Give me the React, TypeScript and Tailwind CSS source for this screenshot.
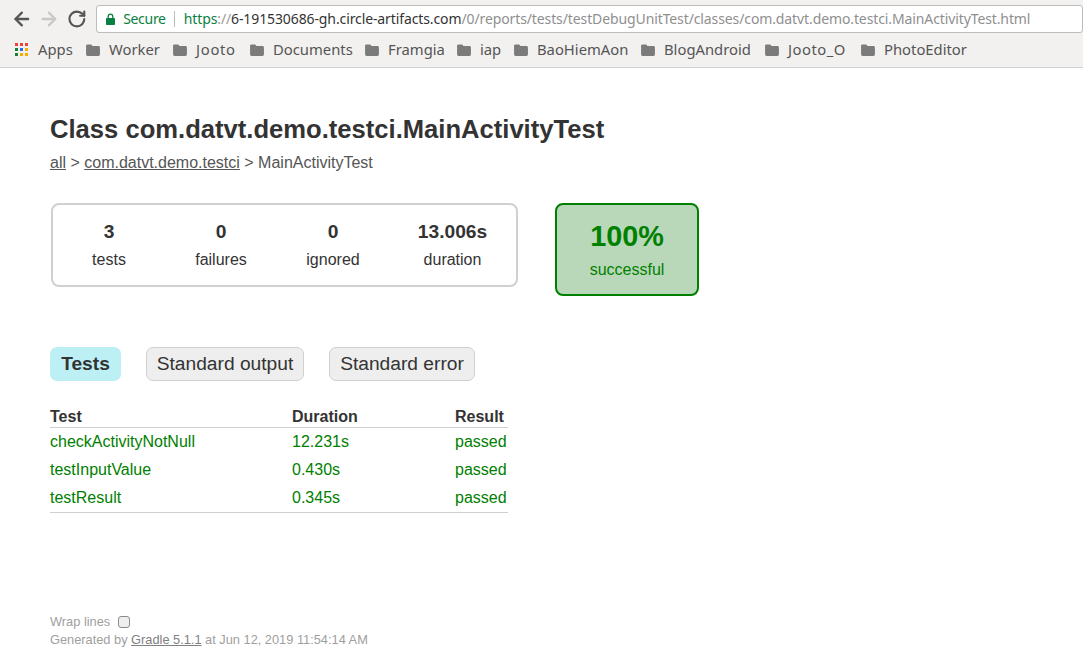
import { ArrowLeft, ArrowRight, RotateCw } from 'lucide-react';

const bookmarks = [
  { name: 'Worker', width: 'w-[51px]' },
  { name: 'Jooto', width: 'w-[41px] tracking-[0.7px]' },
  { name: 'Documents', width: 'w-[79px]' },
  { name: 'Framgia', width: 'w-[56px]' },
  { name: 'iap', width: 'w-[21px]' },
  { name: 'BaoHiemAon', width: 'w-[91px]' },
  { name: 'BlogAndroid', width: 'w-[88px]' },
  { name: 'Jooto_O', width: 'w-[60px] tracking-[0.5px]' },
  { name: 'PhotoEditor', width: 'w-[85px]' },
];

const stats = [
  { value: '3', label: 'tests', cell: 'w-[112px]' },
  { value: '0', label: 'failures', cell: 'w-[112px]' },
  { value: '0', label: 'ignored', cell: 'w-[112px]' },
  { value: '13.006s', label: 'duration', cell: 'w-[127px]' },
];

const rows = [
  { name: 'checkActivityNotNull', duration: '12.231s', height: 'h-[28px]' },
  { name: 'testInputValue', duration: '0.430s', height: 'h-[28px]' },
  { name: 'testResult', duration: '0.345s', height: 'h-[29px] pt-px' },
];

function Folder() {
  return (
    <svg width="14" height="12" viewBox="0 0 15 13" className="shrink-0">
      <path d="M1.5 0.5h4l1.5 1.7h6.5a1.5 1.5 0 0 1 1.5 1.5v7.8a1.5 1.5 0 0 1-1.5 1.5h-12a1.5 1.5 0 0 1-1.5-1.5v-9.5a1.5 1.5 0 0 1 1.5-1.5z" fill="#7b7b7b" />
    </svg>
  );
}

function AppsIcon() {
  const colors = ['#ea4335', '#ea4335', '#ea4335', '#188038', '#1a73e8', '#f9ab00', '#188038', '#f9ab00', '#f9ab00'];
  return (
    <div className="grid grid-cols-3 gap-[2px] w-[13px] h-[13px] shrink-0">
      {colors.map((c, i) => (
        <svg key={i} width="3" height="3" viewBox="0 0 3 3" className="block">
          <rect width="3" height="3" fill={c} />
        </svg>
      ))}
    </div>
  );
}

function SecureLock() {
  return (
    <svg width="9" height="12" viewBox="0 0 9 12" className="shrink-0">
      <path d="M2.2 5.5V3.4a2.3 2.3 0 0 1 4.6 0v2.1" fill="none" stroke="#0b8043" strokeWidth="1.3" />
      <rect x="0" y="5" width="9" height="7" rx="0.8" fill="#0b8043" />
    </svg>
  );
}

export default function App() {
  return (
    <div className="w-[1083px] h-[658px] overflow-hidden bg-white font-['Liberation_Sans',sans-serif] text-[16px] text-[#333]">
      {/* Browser chrome */}
      <div className="h-[68px] bg-[#f2f1f0] border-b border-[#d0d0d0] font-['Noto_Sans',sans-serif]">
        <div className="h-[36px] flex items-center pl-[11px] pt-[1px]">
          <ArrowLeft size={22} strokeWidth={2.5} className="text-[#555]" />
          <ArrowRight size={22} strokeWidth={2.5} className="text-[#c8c8c8] ml-[5px]" />
          <RotateCw size={20} strokeWidth={2.6} className="text-[#555] ml-[8px]" />
          <div className="ml-[9px] w-[1000px] h-[28px] bg-white border border-[#bdbdbd] rounded-[3px] flex items-center pl-[9px] text-[14px] whitespace-nowrap">
            <SecureLock />
            <span className="ml-[8px] text-[#0b8043] tracking-[-0.3px]">Secure</span>
            <span className="ml-[8px] w-px h-[16px] bg-[#bdbdbd]" />
            <span className="ml-[9px] tracking-[-0.11px]">
              <span className="text-[#0b8043]">https</span>
              <span className="text-[#9a9a9a]">://</span>
              <span className="text-[#333]">6-191530686-gh.circle-artifacts.com</span>
              <span className="text-[#8f8f8f]">/0/reports/tests/testDebugUnitTest/classes/com.datvt.demo.testci.MainActivityTest.html</span>
            </span>
          </div>
        </div>
        <div className="h-[27px] flex items-center pl-[15px] text-[14.8px] text-[#555] whitespace-nowrap">
          <AppsIcon />
          <span className="ml-[10px] w-[35px]">Apps</span>
          <div className="ml-[13px] flex items-center gap-[13px]">
            {bookmarks.map((b) => (
              <div key={b.name} className="flex items-center gap-[9px]">
                <Folder />
                <span className={b.width}>{b.name}</span>
              </div>
            ))}
          </div>
        </div>
      </div>

      {/* Report */}
      <div className="pl-[50px]">
        <h1 className="mt-[45px] text-[25.6px] leading-[32px] font-bold">Class com.datvt.demo.testci.MainActivityTest</h1>
        <div className="mt-[8px] leading-[20px] text-[#555]">
          <a className="underline">all</a> &gt; <a className="underline">com.datvt.demo.testci</a> &gt; MainActivityTest
        </div>

        <div className="mt-[30px] flex items-start">
          <div className="ml-px w-[467px] h-[84px] border-2 border-[#d0d0d0] rounded-[8px] flex">
            {stats.map((s) => (
              <div key={s.label} className={`${s.cell} text-center pt-[15px]`}>
                <div className="font-bold text-[19.2px] leading-[24px]">{s.value}</div>
                <div className="mt-[4px] leading-[24px]">{s.label}</div>
              </div>
            ))}
          </div>
          <div className="ml-[37px] w-[144px] h-[93px] border-2 border-[#008000] bg-[#b9d8b9] rounded-[8px] text-center text-[#008000]">
            <div className="mt-[13px] font-bold text-[28.8px] leading-[36px]">100%</div>
            <div className="mt-[4px] leading-[24px]">successful</div>
          </div>
        </div>

        <div className="mt-[51px] flex text-[19.2px]">
          <div className="h-[34px] w-[71px] rounded-[7px] bg-[#bdf0f5] font-bold flex items-center justify-center">Tests</div>
          <div className="ml-[25px] h-[34px] w-[158px] rounded-[7px] bg-[#eeeeee] border border-[#d0d0d0] flex items-center justify-center">Standard output</div>
          <div className="ml-[25px] h-[34px] w-[146px] rounded-[7px] bg-[#eeeeee] border border-[#d0d0d0] flex items-center justify-center">Standard error</div>
        </div>

        <table className="mt-[26px] w-[458px] border-b border-[#cfcfcf] table-fixed">
          <thead>
            <tr className="border-b border-[#cfcfcf] font-bold text-left">
              <th className="w-[242px] h-[20px] p-0 leading-[20px]">Test</th>
              <th className="w-[163px] p-0 leading-[20px]">Duration</th>
              <th className="p-0 leading-[20px]">Result</th>
            </tr>
          </thead>
          <tbody className="text-[#008000]">
            {rows.map((r) => (
              <tr key={r.name} className={r.height}>
                <td className="p-0">{r.name}</td>
                <td className="p-0">{r.duration}</td>
                <td className="p-0">passed</td>
              </tr>
            ))}
          </tbody>
        </table>

        <div className="mt-[100px] text-[12.8px] leading-[18px] text-[#a0a0a0]">
          <div className="flex items-center">
            Wrap lines
            <input type="checkbox" className="ml-[8px] appearance-none w-[12px] h-[12px] border border-[#8a8a8a] rounded-[3px] bg-[#efefef]" />
          </div>
          <div>
            Generated by <a className="underline text-[#808080]">Gradle 5.1.1</a> at Jun 12, 2019 11:54:14 AM
          </div>
        </div>
      </div>
    </div>
  );
}
